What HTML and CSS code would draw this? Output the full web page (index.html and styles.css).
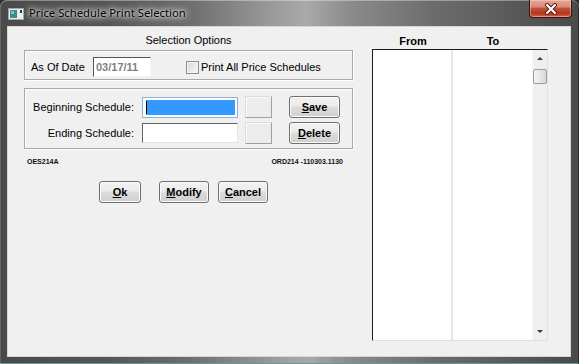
FILE: index.html
```html
<!DOCTYPE html>
<html>
<head>
<meta charset="utf-8">
<link rel="stylesheet" href="styles.css">
</head>
<body>
<div class="window">
  <div class="titlebar">
    <svg class="app-icon" width="16" height="12" viewBox="0 0 16 12">
      <rect x="0.5" y="0.5" width="15" height="11" fill="#e8eef0" stroke="#9aa6aa"/>
      <rect x="2" y="2" width="7" height="8" fill="#3f8c8a"/>
      <rect x="3" y="3" width="3" height="3" fill="#7fc3bd"/>
      <rect x="12" y="2" width="2" height="3" fill="#2e3a3c"/>
    </svg>
    <span class="title">Price Schedule Print Selection</span>
    <div class="close">
      <svg width="14" height="12" viewBox="0 0 14 12">
        <path d="M3 2 L11 10 M11 2 L3 10" stroke="#5a1a10" stroke-width="4" stroke-linecap="round"/>
        <path d="M3 2 L11 10 M11 2 L3 10" stroke="#ffffff" stroke-width="2.2" stroke-linecap="round"/>
      </svg>
    </div>
  </div>
  <div class="client">
    <div class="left">
      <div class="section-title">Selection Options</div>
      <div class="group g1">
        <span class="lbl-date">As Of Date</span>
        <div class="field date">03/17/11</div>
        <span class="check"></span>
        <span class="check-label">Print All Price Schedules</span>
      </div>
      <div class="group g2">
        <div class="row">
          <span class="rlabel">Beginning Schedule:</span>
          <div class="field focused"><span class="sel"></span><span class="caret"></span></div>
          <div class="lookup"></div>
          <div class="btn btn-side"><span><u>S</u>ave</span></div>
        </div>
        <div class="row row2">
          <span class="rlabel">Ending Schedule:</span>
          <div class="field plain"></div>
          <div class="lookup"></div>
          <div class="btn btn-side"><span><u>D</u>elete</span></div>
        </div>
      </div>
      <div class="codes"><span>OES214A</span><span>ORD214 -110303.1130</span></div>
      <div class="actions">
        <div class="btn btn-ok"><span><u>O</u>k</span></div>
        <div class="btn btn-modify"><span><u>M</u>odify</span></div>
        <div class="btn btn-cancel"><span><u>C</u>ancel</span></div>
      </div>
    </div>
    <div class="right">
      <div class="heads"><span class="h1">From</span><span class="h2">To</span></div>
      <div class="list">
        <div class="col c1"></div>
        <div class="col c2"></div>
        <div class="scroll">
          <div class="arrow"><span class="tri-up"></span></div>
          <div class="thumb"></div>
          <div class="track"></div>
          <div class="arrow"><span class="tri-down"></span></div>
        </div>
      </div>
    </div>
  </div>
</div>
</body>
</html>
```
FILE: styles.css
```css
html, body {
  margin: 0;
  padding: 0;
  background: #2e2e2e;
}
body {
  font-family: "Liberation Sans", Arial, sans-serif;
  color: #000;
}
.window {
  width: 579px;
  height: 364px;
  box-sizing: border-box;
  padding: 0 8px 7px 7px;
  display: flex;
  flex-direction: column;
  border-radius: 7px 7px 0 0;
  background: linear-gradient(to right, #4a4a4a 0%, #555 18%, #6e6e6e 33%, #9a9a9a 47%, #a9a9a9 53%, #8c8c8c 60%, #6c6c6c 75%, #575757 90%, #4a4a4a 100%);
  box-shadow: inset 0 1px 0 rgba(255,255,255,0.35), inset 1px 0 0 rgba(255,255,255,0.15), inset -1px 0 0 rgba(0,0,0,0.4), inset 0 -1px 0 #5f9aa3;
}
.titlebar {
  height: 26px;
  display: flex;
  align-items: flex-start;
  flex: none;
}
.app-icon {
  margin: 8px 0 0 1px;
  flex: none;
}
.title {
  margin: 5px 0 0 5px;
  font-family: "Noto Sans", "Open Sans", sans-serif;
  font-size: 11.3px;
  line-height: 16px;
  color: #000;
  text-shadow: 0 0 6px #fff, 0 0 10px rgba(255,255,255,0.9), 0 0 3px rgba(255,255,255,0.8);
}
.close {
  margin-left: auto;
  margin-right: -1px;
  width: 43px;
  height: 18px;
  box-sizing: border-box;
  border: 1px solid #3a1510;
  border-top: none;
  border-radius: 0 0 4px 4px;
  background: linear-gradient(#e6a696 0%, #d98a78 40%, #c4503a 50%, #b33620 78%, #d9623f 100%);
  box-shadow: inset 0 0 0 1px rgba(255,220,210,0.45);
  display: flex;
  align-items: center;
  justify-content: center;
}
.client {
  flex: 1;
  display: flex;
  background: #f0f0f0;
  border: 1px solid #d6d6d6;
}
.left {
  width: 329px;
  margin-left: 16px;
  display: flex;
  flex-direction: column;
}
.section-title {
  height: 23px;
  box-sizing: border-box;
  padding-top: 7px;
  font-size: 11px;
  line-height: 13px;
  text-align: center;
}
.group {
  box-sizing: border-box;
  border: 1px solid #a9a9a9;
  box-shadow: 1px 1px 0 #ffffff, inset 1px 1px 0 #ffffff;
  flex: none;
}
.g1 {
  height: 30px;
  padding: 4px 0 0 6px;
  display: flex;
  align-items: center;
  font-size: 11px;
}
.lbl-date {
  width: 62px;
}
.field {
  box-sizing: border-box;
  background: #fff;
}
.date {
  width: 58px;
  height: 20px;
  border-top: 1px solid #545454;
  border-left: 1px solid #545454;
  border-right: 1px solid #f4f4f4;
  border-bottom: 1px solid #f4f4f4;
  font-weight: bold;
  color: #7f7f7f;
  font-size: 11px;
  line-height: 18px;
  padding-left: 2px;
}
.check {
  margin-left: 35px;
  width: 13px;
  height: 13px;
  box-sizing: border-box;
  border: 1px solid #8f8f8f;
  background: linear-gradient(135deg, #d9d9d9, #f8f8f8);
  box-shadow: inset 0 0 0 1px #f4f4f4;
}
.check-label {
  margin-left: 2px;
}
.g2 {
  margin-top: 8px;
  height: 61px;
  padding: 7px 0 0 0;
}
.row {
  display: flex;
  align-items: center;
  height: 22px;
  font-size: 11px;
}
.row2 {
  margin-top: 4px;
}
.rlabel {
  width: 109px;
  text-align: right;
}
.focused {
  margin-left: 8px;
  width: 96px;
  height: 21px;
  border: 1px solid #8fb2d6;
  padding: 2px 2px 2px 3px;
  position: relative;
  display: flex;
}
.sel {
  flex: 1;
  background: #3399ff;
}
.caret {
  position: absolute;
  left: 3px;
  top: 3px;
  width: 1px;
  height: 13px;
  background: #000;
}
.plain {
  margin-left: 8px;
  width: 96px;
  height: 20px;
  border-top: 1px solid #646464;
  border-left: 1px solid #646464;
  border-right: 1px solid #e3e3e3;
  border-bottom: 1px solid #e3e3e3;
}
.lookup {
  margin-left: 7px;
  width: 27px;
  height: 22px;
  box-sizing: border-box;
  background: #ececec;
  border-top: 1px solid #dcdcdc;
  border-left: 1px solid #dcdcdc;
  border-right: 1px solid #a0a0a0;
  border-bottom: 1px solid #a0a0a0;
  box-shadow: inset 1px 1px 0 #fafafa;
}
.btn {
  box-sizing: border-box;
  height: 22px;
  border: 1px solid #707070;
  border-radius: 3px;
  background: linear-gradient(#f2f2f2 0%, #ebebeb 45%, #dddddd 50%, #cfcfcf 100%);
  box-shadow: inset 0 0 0 1px #fbfbfb;
  display: flex;
  align-items: center;
  justify-content: center;
  font-size: 11px;
  font-weight: bold;
  color: #000;
}
.btn u {
  text-decoration: underline;
  text-underline-offset: 1px;
}
.btn-side {
  margin-left: 17px;
  width: 51px;
}
.codes {
  margin-top: 8px;
  height: 9px;
  display: flex;
  justify-content: space-between;
  padding: 0 10px 0 3px;
  font-size: 7px;
  line-height: 9px;
  font-weight: bold;
  color: #111;
}
.actions {
  margin-top: 15px;
  margin-left: 75px;
  display: flex;
}
.btn-ok {
  width: 42px;
}
.btn-modify {
  width: 50px;
  margin-left: 18px;
}
.btn-cancel {
  width: 50px;
  margin-left: 9px;
}
.right {
  margin-left: 19px;
  width: 176px;
  display: flex;
  flex-direction: column;
}
.heads {
  height: 22px;
  box-sizing: border-box;
  padding-top: 8px;
  display: flex;
  font-size: 11px;
  line-height: 13px;
  font-weight: bold;
}
.h1, .h2 {
  width: 80px;
  text-align: center;
}
.h1 {
  margin-left: 1px;
}
.list {
  height: 292px;
  box-sizing: border-box;
  display: flex;
  border-top: 1px solid #1c1c1c;
  border-left: 1px solid #1c1c1c;
  border-right: 1px solid #e3e3e3;
  border-bottom: 1px solid #e0e0e0;
  background: #fff;
}
.col {
  background: #fff;
}
.c1 {
  width: 78px;
  border-right: 2px solid #e6e6e6;
}
.c2 {
  width: 79px;
}
.scroll {
  width: 15px;
  display: flex;
  flex-direction: column;
  background: #efefef;
  box-shadow: inset 1px 0 0 #f8f8f8;
}
.arrow {
  height: 17px;
  display: flex;
  align-items: center;
  justify-content: center;
  flex: none;
}
.tri-up {
  width: 0;
  height: 0;
  border-left: 3px solid transparent;
  border-right: 3px solid transparent;
  border-bottom: 3px solid #3c3c3c;
}
.tri-down {
  width: 0;
  height: 0;
  border-left: 3px solid transparent;
  border-right: 3px solid transparent;
  border-top: 3px solid #3c3c3c;
}
.thumb {
  margin: 2px 0 0 1px;
  width: 14px;
  height: 15px;
  box-sizing: border-box;
  border: 1px solid #9a9a9a;
  border-radius: 2px;
  background: linear-gradient(to right, #f4f4f4, #e6e6e6 55%, #d6d6d6);
  flex: none;
}
.track {
  flex: 1;
}
```
